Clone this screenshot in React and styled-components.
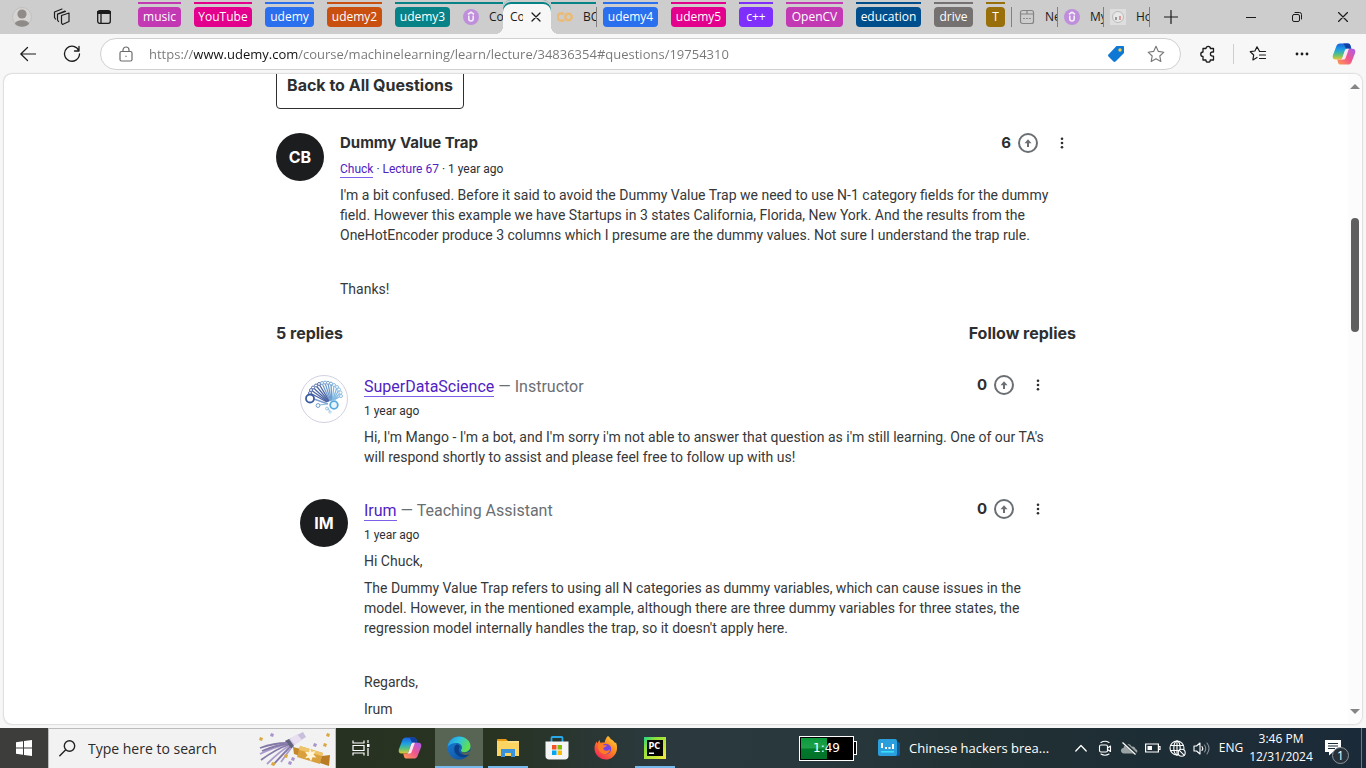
import React from "react";
import styled, { createGlobalStyle } from "styled-components";

const content = 'Roboto, "Liberation Sans", sans-serif';
const heading = 'Inter, "Liberation Sans", sans-serif';
const chrome = '"Open Sans", "Noto Sans", sans-serif';

const Global = createGlobalStyle`
  *, *::before, *::after { box-sizing: border-box; }
  html, body { margin: 0; background: #f7f7f7; }
  body { font-family: ${content}; color: #2d2f31; }
  button, input { font: inherit; color: inherit; margin: 0; padding: 0; border: 0; background: none; }
  p { margin: 0; }
  svg { display: block; flex: none; }
`;

const Screen = styled.div`
  display: flex;
  flex-direction: column;
  height: 100vh;
  overflow: hidden;
`;

/* ---------- tab strip ---------- */

const TabStrip = styled.header`
  display: flex;
  flex: none;
  height: 34px;
  background: #cdcdcd;
  font: 12px/20px ${chrome};
  color: #1b1b1b;
`;

const StripButton = styled.button`
  display: flex;
  align-items: center;
  justify-content: center;
  flex: none;
  width: ${(p) => p.$w || 40}px;
  height: 34px;
`;

const StripStart = styled.div`
  display: flex;
  flex: none;
  width: 138px;
  padding-left: 2px;
`;

const Groups = styled.div`
  display: flex;
  gap: 13px;
  flex: none;
  margin-right: ${(p) => p.$after || 0}px;
`;

const Group = styled.button`
  display: flex;
  flex-direction: column;
  gap: 3px;
  width: ${(p) => p.$w}px;
  padding-top: 2px;
  color: #fff;
  &::before {
    content: "";
    width: 100%;
    height: 2px;
    background: ${(p) => p.$c};
  }
  span {
    width: 100%;
    height: 20px;
    border-radius: 4px;
    line-height: 19px;
    text-align: center;
    background: ${(p) => p.$c};
  }
`;

const flare = {
  left: "radial-gradient(circle at 0 0, transparent 8px, #f7f7f7 8px) right bottom / 8px 8px no-repeat",
  right: "radial-gradient(circle at 100% 0, transparent 8px, #f7f7f7 8px) left bottom / 8px 8px no-repeat",
};

const Tab = styled.button`
  display: flex;
  align-items: center;
  gap: ${(p) => p.$gap || 10}px;
  flex: none;
  width: ${(p) => p.$w}px;
  height: 34px;
  padding: 0 0 0 ${(p) => p.$pad || 8}px;
  background: ${(p) => (p.$active ? "#f7f7f7" : flare[p.$side] || "transparent")};
  border-radius: ${(p) => (p.$active ? "8px 8px 0 0" : "0")};
  box-shadow: ${(p) => (p.$group ? "inset 0 2px 0 #cdcdcd, inset 0 4px 0 #078387" : "none")};
  white-space: nowrap;
`;

const TabText = styled.span`
  width: ${(p) => p.$w || 13}px;
  overflow: hidden;
  text-align: left;
`;

const Divider = styled.span`
  flex: none;
  align-self: center;
  width: 1px;
  height: 20px;
  background: ${(p) => p.$c || "#808080"};
  margin-right: ${(p) => p.$after || 0}px;
`;

const WindowButtons = styled.div`
  display: flex;
  margin-left: auto;
`;

/* ---------- toolbar ---------- */

const Toolbar = styled.nav`
  display: flex;
  align-items: center;
  flex: none;
  height: 40px;
  padding-left: 8px;
`;

const ToolButton = styled.button`
  display: flex;
  align-items: center;
  justify-content: center;
  flex: none;
  width: ${(p) => p.$w || 40}px;
  height: 32px;
`;

const ToolGroup = styled.div`
  display: flex;
  align-items: center;
`;

const Address = styled.label`
  display: flex;
  align-items: center;
  flex: 1;
  min-width: 0;
  height: 32px;
  margin-left: 4px;
  padding: 0 4px 0 17px;
  gap: 15px;
  background: #fff;
  border: 1px solid #d0d0d0;
  border-radius: 16px;
`;

const Url = styled.input`
  flex: 1;
  min-width: 0;
  height: 28px;
  font: 13px/20px ${chrome};
  color: transparent;
  background: linear-gradient(90deg, #767676 45px, #111 45px, #111 149px, #767676 149px);
  background-clip: text;
  -webkit-background-clip: text;
  outline: none;
`;

/* ---------- web page ---------- */

const Panel = styled.main`
  display: flex;
  flex: 1;
  min-height: 0;
  margin: 0 4px 4px;
  background: #fff;
  border-radius: 8px;
  box-shadow: 0 0 2px rgba(0, 0, 0, 0.35);
  overflow: hidden;
`;

const Scroller = styled.div`
  flex: 1;
  min-width: 0;
  overflow: hidden;
`;

const Column = styled.div`
  max-width: 800px;
  margin: -13px auto 0;
`;

const BackButton = styled.button`
  display: block;
  width: 188px;
  height: 48px;
  border: 1px solid #2d2f31;
  border-radius: 4px;
  font: 700 16px/20px ${heading};
  white-space: nowrap;
`;

const Post = styled.article`
  display: flex;
  gap: 16px;
  margin-top: ${(p) => p.$top}px;
`;

const Avatar = styled.div`
  display: flex;
  align-items: center;
  justify-content: center;
  flex: none;
  width: 48px;
  height: 48px;
  border-radius: 50%;
  border: ${(p) => (p.$logo ? "1px solid #d1d2e0" : "0")};
  background: ${(p) => (p.$logo ? "#fff" : "#1c1d1f")};
  color: #fff;
  font: 700 16px/20px ${heading};
`;

const PostMain = styled.div`
  flex: 1;
  min-width: 0;
`;

const PostHead = styled.div`
  display: flex;
  align-items: flex-start;
  justify-content: space-between;
`;

const Title = styled.h2`
  margin: 0;
  font: 700 15px/20px ${heading};
`;

const Link = styled.a`
  color: #5022c3;
  text-decoration: none;
  border-bottom: ${(p) => (p.$plain ? "0" : "1px solid #7d5fe8")};
`;

const Author = styled.div`
  font-size: 16px;
  line-height: 24px;
  color: #6a6f73;
`;

const Meta = styled.div`
  margin-top: ${(p) => p.$top}px;
  font-size: 12px;
  line-height: 16px;
  a { padding-bottom: 1px; }
`;

const Body = styled.div`
  display: flex;
  flex-direction: column;
  gap: 7px;
  margin-top: 8px;
  font-size: 14px;
  line-height: 20px;
  white-space: nowrap;
  color: #36383a;
  p { min-height: 20px; }
`;

const Votes = styled.div`
  display: flex;
  align-items: center;
  height: 20px;
  font: 700 15px/20px ${heading};
`;

const VoteButton = styled.button`
  margin: 0 10px 0 7px;
`;

const MenuButton = styled.button`
  display: flex;
  justify-content: center;
  width: 28px;
`;

const RepliesHead = styled.div`
  display: flex;
  justify-content: space-between;
  margin-top: 24px;
  font: 700 16px/20px ${heading};
`;

const Replies = styled.section`
  padding: 0 24px;
`;

const Scrollbar = styled.div`
  display: flex;
  flex-direction: column;
  align-items: center;
  flex: none;
  width: 14px;
  padding: 10px 0;
  background: #fcfcfc;
`;

const Track = styled.div`
  display: flex;
  flex-direction: column;
  flex: 1;
  width: 8px;
  &::before { content: ""; flex: 128; }
  &::after { content: ""; flex: 375; }
`;

const Thumb = styled.div`
  flex: 114;
  border-radius: 4px;
  background: #5f5f5f;
`;

/* ---------- taskbar ---------- */

const Taskbar = styled.footer`
  display: flex;
  flex: none;
  height: 40px;
  background: linear-gradient(90deg, #263021 0%, #283322 36%, #2b393f 48%, #28383c 60%, #203033 72%, #1b2a38 100%);
  color: #fff;
  font: 13px/20px ${chrome};
`;

const Start = styled.button`
  display: flex;
  align-items: center;
  justify-content: center;
  flex: none;
  width: 48px;
  background: #3d3d3c;
`;

const Search = styled.label`
  display: flex;
  align-items: center;
  flex: none;
  width: 288px;
  padding: 0 3px 0 10px;
  gap: 12px;
  background: #f2f2f2;
  border: 1px solid #bcbcbc;
  border-bottom: 0;
  input {
    flex: 1;
    min-width: 0;
    font-size: 14px;
    color: #2b2b2b;
    outline: none;
  }
  input::placeholder { color: #2b2b2b; opacity: 1; }
`;

const Apps = styled.div`
  display: flex;
  gap: 1px;
  padding-left: 1px;
`;

const AppButton = styled.button`
  display: flex;
  align-items: center;
  justify-content: center;
  width: 48px;
  height: 40px;
  background: ${(p) => (p.$active ? "#586454" : "transparent")};
  position: relative;
  &::after {
    content: "";
    display: ${(p) => (p.$line ? "block" : "none")};
    position: absolute;
    left: ${(p) => (p.$active ? 0 : 4)}px;
    right: ${(p) => (p.$active ? 0 : 4)}px;
    bottom: 0;
    height: 2px;
    background: #76b9ed;
  }
`;

const TaskRight = styled.div`
  display: flex;
  align-items: center;
  margin-left: auto;
`;

const Battery = styled.div`
  display: flex;
  align-items: center;
  flex: none;
  &::after {
    content: "";
    width: 3px;
    height: 14px;
    border: 1px solid #fff;
    border-left: 0;
    background: #000;
  }
`;

const BatteryBody = styled.div`
  width: 55px;
  height: 25px;
  border: 1px solid #fff;
  outline: 1px solid #000;
  outline-offset: -2px;
  background: linear-gradient(90deg, transparent 50%, #000 50%), linear-gradient(#0a9a3c 0%, #1fa04a 48%, #007a2a 52%, #03702a 100%);
  font: 12px/23px "DejaVu Sans", sans-serif;
  text-align: center;
`;

const News = styled.button`
  display: flex;
  align-items: center;
  gap: 9px;
  width: 172px;
  margin: 0 19px 0 21px;
  white-space: nowrap;
`;

const TrayButton = styled.button`
  display: flex;
  align-items: center;
  justify-content: center;
  width: 24px;
  height: 40px;
`;

const Lang = styled.button`
  width: 36px;
  font-size: 12px;
`;

const Clock = styled.button`
  width: 64px;
  font-size: 12px;
  line-height: 18px;
  white-space: nowrap;
  span { display: block; }
`;

const Notice = styled.button`
  position: relative;
  display: flex;
  justify-content: center;
  width: 40px;
`;

const Badge = styled.span`
  position: absolute;
  left: 19px;
  top: 7px;
  width: 17px;
  height: 17px;
  border: 1px solid #8d959b;
  border-radius: 50%;
  background: #28313a;
  font-size: 12px;
  line-height: 15px;
`;

const Desktop = styled.button`
  width: 5px;
  height: 40px;
  margin-left: 8px;
  border-left: 1px solid #6d7882;
`;

/* ---------- icons ---------- */

const Line = ({ s = 16, w = 1, c = "#1b1b1b", children, vb }) => (
  <svg width={s} height={s} viewBox={vb || `0 0 ${s} ${s}`} fill="none" stroke={c} strokeWidth={w} strokeLinecap="round" strokeLinejoin="round" aria-hidden="true">
    {children}
  </svg>
);

const UdemyIcon = () => (
  <svg width="16" height="16" viewBox="0 0 16 16" aria-hidden="true">
    <circle cx="8" cy="8" r="8" fill="#bf8fdc" />
    <path d="M5 5.2 8 3.3l3 1.9M5.8 6.6v3.2c0 3 4.4 3 4.4 0V6.6" fill="none" stroke="#f4ecf8" strokeWidth="1.6" />
  </svg>
);

const CopilotIcon = ({ s = 24, id }) => (
  <svg width={s} height={s} viewBox="0 0 24 24" aria-hidden="true">
    <defs>
      <linearGradient id={`${id}a`} x1="0" y1="0" x2="0" y2="1">
        <stop offset="0" stopColor="#1a5fe0" /><stop offset=".4" stopColor="#1fa3e0" /><stop offset=".7" stopColor="#5cc27c" /><stop offset="1" stopColor="#e8c62c" />
      </linearGradient>
      <linearGradient id={`${id}b`} x1="1" y1="0" x2="0" y2="1">
        <stop offset="0" stopColor="#a95cf0" /><stop offset=".5" stopColor="#f0568c" /><stop offset="1" stopColor="#ffa04c" />
      </linearGradient>
    </defs>
    <path d="M8 1.4h8c1.4 0 2 .8 2.4 2l1 3.4h-4c-1.4 0-2.2.8-2.6 2l-2.2 6.6c-.5 1.5-1.3 2.2-2.8 2.2H3.6C1 17.600.2 15.600.9 13.300L4.300 4.200C5 2.300 6 1.400 8 1.400z" fill={`url(#${id}a)`} />
    <path d="M13 1.400h3c1.400 0 2 .8 2.400 2l1 3.400h-4c-1.400 0-2-.8-2.400-2.200C12.600 3 12 1.400 10.800 1.400z" fill="#123fa6" />
    <path d="M16 22.600H8.600c-1.500 0-2.200-.8-2.600-2.200l-.8-2.800h3c1.500 0 2.300-.7 2.800-2.200l2.200-6.600c.4-1.200 1.200-2 2.600-2h4.600c2.600 0 3.400 2 2.700 4.300l-3.400 8.700c-.7 1.900-1.700 2.800-3.700 2.800z" fill={`url(#${id}b)`} />
    <path d="M10.600 15.400l2.300-6.600c.4-1.200 1-1.700 2-2h2l-3.200 9c-.5 1.300-1.300 1.800-2.400 1.800H9c.8-.4 1.300-1.200 1.600-2.200z" fill="#fff" opacity=".85" />
  </svg>
);

const UpIcon = () => (
  <svg width="20" height="20" viewBox="0 0 20 20" fill="none" stroke="#6a6f73" aria-hidden="true">
    <circle cx="10" cy="10" r="9" strokeWidth="2" />
    <path d="M10 14V8" strokeWidth="2" />
    <path d="M6.500 10.200 10 6.200l3.500 4z" fill="#6a6f73" stroke="none" />
  </svg>
);

const DotsIcon = () => (
  <svg width="4" height="12" viewBox="0 0 4 12" fill="#2d2f31" aria-hidden="true">
    <circle cx="2" cy="1.700" r="1.300" /><circle cx="2" cy="6" r="1.300" /><circle cx="2" cy="10.300" r="1.300" />
  </svg>
);

const fan = [
  [8, 14], [9, 11], [11, 8.500], [14, 6.500], [17, 5], [20, 4], [23, 3.600], [26, 3.800], [29, 4.600], [32, 6], [35, 8], [37, 10.500], [38.500, 13.500], [39, 17],
];

const ScienceLogo = () => (
  <svg width="44" height="40" viewBox="0 0 44 40" fill="none" aria-hidden="true">
    {fan.map(([x, y], i) => (
      <g key={x} stroke={i < 5 ? "#4a63a4" : i < 9 ? "#6f9ccc" : "#82b8e2"}>
        <path d={`M${x} ${y}L${25 + i * 0.6} ${23 - i * 0.2}`} strokeWidth="1.300" />
        <circle cx={x} cy={y} r="1.500" fill="#fff" strokeWidth=".9" />
      </g>
    ))}
    <path d="M12 20l14 5" stroke="#7d9fcd" strokeWidth="1.500" />
    <circle cx="8" cy="19.500" r="4" fill="#fff" stroke="#3c5ba0" strokeWidth="1.800" />
    <circle cx="32" cy="26" r="3.800" fill="#e9f5fd" stroke="#58a9de" strokeWidth="1.800" />
    <path d="M17 26l8-1M26 29l2 4" stroke="#86b6dc" />
    <circle cx="16" cy="26.500" r="1.900" fill="#fff" stroke="#6f9ccc" />
    <circle cx="25" cy="29.500" r="1.400" stroke="#9cc7e8" /><circle cx="28" cy="33" r="1.200" stroke="#b4d6ee" />
  </svg>
);

const star = "M8 1.200l2.100 4.500 4.900.7-3.600 3.400.9 4.900L8 12.300l-4.300 2.400.9-4.900L1 6.400l4.900-.7z";

const Confetti = () => (
  <svg width="74" height="36" viewBox="0 0 74 36" aria-hidden="true">
    <path d="M45 1l3 5-15 10-6-6z" fill="#c9bedb" />
    <path d="M39 3l5 6-7 5-5-6z" fill="#e8dff0" />
    <path d="M31 8l5 7-3 3-6-8z" fill="#62637f" />
    {["M29 12Q16 12 2 17", "M29 13Q16 16 2 23", "M30 14Q18 18 3 29", "M31 15Q22 20 9 33", "M32 16Q26 22 15 34", "M33 17Q28 24 23 31", "M30 13Q18 14 4 20"].map((d, i) => (
      <path key={d} d={d} fill="none" stroke={i % 2 ? "#aa9bcb" : "#8579a8"} strokeWidth="1.800" />
    ))}
    <path d="M35 16l8 2-1 7-6-2z" fill="#c3872c" />
    <path d="M42 15l23 7-3 11-23-7z" fill="#d9a03d" />
    <path d="M42 15l23 7-1 3-23-6z" fill="#efc367" />
    <path d="M64 25l8-1-1 11-9-3z" fill="#b97c24" />
    <path d="M52 17l1.500 4 4-1-2 3.500 3 3-4-.2-1.500 4-2-3.500-4 .5 2.500-3-2.500-3.500 4 .5z" fill="#fff4d8" />
    <g fill="#d9a840"><path d="M2 6l3 1-1 3-3-1zM69 2l3 1-1 3-3-1zM66 12l3 1-1 3-3-1zM14 31l4 1-2 3-3-1zM27 23l3 1-1 3-3-1z" /></g>
    <g fill="#a893cc"><path d="M13 2l3 1-1 3-3-1zM56 12l3 1-1 3-3-1zM34 26l3 1-1 3-3-1zM31 30l3 1-1 3-3-1z" /></g>
  </svg>
);

const EdgeIcon = () => (
  <svg width="24" height="24" viewBox="0 0 24 24" aria-hidden="true">
    <defs>
      <linearGradient id="edgeTop" x1="0" y1="0" x2="1" y2=".4"><stop offset="0" stopColor="#1f8fe0" /><stop offset=".5" stopColor="#2fc2df" /><stop offset="1" stopColor="#5fe04f" /></linearGradient>
      <linearGradient id="edgeLow" x1="0" y1="0" x2="1" y2="1"><stop offset="0" stopColor="#1b7fd6" /><stop offset="1" stopColor="#0c4a98" /></linearGradient>
    </defs>
    <circle cx="12" cy="12" r="11.500" fill="url(#edgeLow)" />
    <path d="M.6 11C1.500 4.500 6.500.5 12 .5c6.500 0 11.500 4.600 11.500 9.500 0 4-3 6.200-6 6.200-2.600 0-3.900-1-3.500-2 .4-.8 1-1.300 1-2.700C15 9 12.500 7 9.500 7 5.500 7 2 8.500.6 11z" fill="url(#edgeTop)" />
    <path d="M9.500 8.500C6 10.500 6.300 18 12.500 20.500c3 1.200 6 .8 9-1.200l.8-1.300c-5 2-10 .5-10.500-3.500-.2-2 .3-3 1-4-.8-1.500-2-2.300-3.300-2z" fill="#0b3f86" />
    <path d="M14 15c2 2 6 2.200 9 .2l1.500 1.800-2.300 1.300c-3.700 1.300-7.700.5-8.200-3.300z" fill="#586454" />
  </svg>
);

const FolderIcon = () => (
  <svg width="22" height="20" viewBox="0 0 22 20" aria-hidden="true">
    <path d="M0 3V1.500L1 1h8l2 2z" fill="#e79a12" />
    <path d="M0 3h22v15H0z" fill="#fcd462" /><path d="M0 3h9l2 1.500h11V3z" fill="#ffe391" />
    <path d="M4 11h14v8h-4v-4H8v4H4z" fill="#3a92d8" />
  </svg>
);

const StoreIcon = () => (
  <svg width="24" height="24" viewBox="0 0 24 24" aria-hidden="true">
    <path d="M6.500 6V2c0-.6.4-1 1-1h9c.6 0 1 .4 1 1v4" fill="none" stroke="#28a8e8" strokeWidth="1.800" />
    <path d="M.5 5.500h23V20c0 2-1.500 3.500-3.500 3.500H4C2 23.500.5 22 .5 20z" fill="#f4f4f4" />
    <path d="M7 9h4.500v4.500H7z" fill="#f35325" /><path d="M12.500 9H17v4.500h-4.500z" fill="#81bc06" />
    <path d="M7 14.500h4.500V19H7z" fill="#05a6f0" /><path d="M12.500 14.500H17V19h-4.500z" fill="#ffba08" />
  </svg>
);

const FirefoxIcon = () => (
  <svg width="24" height="24" viewBox="0 0 24 24" aria-hidden="true">
    <defs>
      <linearGradient id="fox" x1="1" y1="0" x2=".2" y2="1"><stop offset="0" stopColor="#ffe24a" /><stop offset=".45" stopColor="#ff8a1c" /><stop offset="1" stopColor="#f0245e" /></linearGradient>
    </defs>
    <path d="M14 0c1.500 1 2 2.200 3 3.200 1 .4 3 2 4 3.800l1-.6c1.200 3 1.500 6.500.3 9.600-2 5-6 7.500-10.300 7.500C5.500 23.500.5 18.500.5 12.500c0-3 .9-5.500 2.400-7l.4 2C4.500 5.500 5 4.500 5.500 4l1 3c1.500-.6 3-.6 4-.2C11 4 12.500 1 14 0z" fill="url(#fox)" />
    <circle cx="12" cy="13" r="5.200" fill="#7542e5" />
    <path d="M4 8.500c2-1.500 4-.8 6 .8h3c-.5 1.500-2.500 2-3.500 2.500-.5 2 1 3 2.800 3 1.500 0 3-.5 4-2-.5 5-5 6.500-8.500 4.500C4.500 15 3.500 11.500 4 8.500z" fill="#ff7a24" />
  </svg>
);

const PyIcon = () => (
  <svg width="22" height="22" viewBox="0 0 22 22" aria-hidden="true">
    <defs><linearGradient id="pyc" x1="0" y1="0" x2="1" y2="1"><stop offset="0" stopColor="#21d789" /><stop offset=".3" stopColor="#8fe03a" /><stop offset="1" stopColor="#f4ea3c" /></linearGradient></defs>
    <path d="M0 0h22v22H0z" fill="url(#pyc)" /><path d="M3 3h16v16H3z" fill="#050505" />
    <path d="M5 15.500h5v1.500H5z" fill="#fff" />
    <text x="4.500" y="11.500" fill="#fff" fontFamily="DejaVu Sans" fontWeight="700" fontSize="8">PC</text>
  </svg>
);

const NewsIcon = () => (
  <svg width="22" height="18" viewBox="0 0 22 18" aria-hidden="true">
    <path d="M17 3h3c1 0 2 1 2 2v10c0 1-1 2-2 2h-3z" fill="#0d5b9d" />
    <rect width="19" height="17" y="0" rx="2" fill="#2b9fdc" />
    <path d="M3 4h2v5H3zM7 8h2v2H7zM10.500 8h2v2h-2zM14 5h2v5h-2z" fill="#fff" /><path d="M3 12h13v1.600H3z" fill="#38dff8" />
  </svg>
);

const groupsLeft = [["music", "#c239b3", 43], ["YouTube", "#e3008c", 58], ["udemy", "#2a6fed", 49], ["udemy2", "#ca5010", 55], ["udemy3", "#078387", 55]];
const groupsRight = [["udemy4", "#2a6fed", 55], ["udemy5", "#e3008c", 55], ["c++", "#7f2ffb", 34], ["OpenCV", "#c239b3", 57], ["education", "#004e8c", 65], ["drive", "#757170", 39], ["T", "#986f0b", 19]];

const GroupRow = ({ items, after }) => (
  <Groups $after={after}>
    {items.map(([name, c, w]) => <Group key={name} $c={c} $w={w}><span>{name}</span></Group>)}
  </Groups>
);

const VoteBox = ({ count }) => (
  <Votes>
    <span>{count}</span>
    <VoteButton aria-label="Upvote"><UpIcon /></VoteButton>
    <MenuButton aria-label="More options"><DotsIcon /></MenuButton>
  </Votes>
);

const Reply = ({ avatar, logo, name, role, children }) => (
  <Post $top={32}>
    <Avatar $logo={logo}>{avatar}</Avatar>
    <PostMain>
      <PostHead>
        <Author><Link href="#user">{name}</Link> — {role}</Author>
        <VoteBox count={0} />
      </PostHead>
      <Meta $top={4}>1 year ago</Meta>
      <Body>{children}</Body>
    </PostMain>
  </Post>
);

export default function App() {
  return (
    <Screen>
      <Global />
      <TabStrip>
        <StripStart>
          <StripButton aria-label="Profile">
            <svg width="20" height="20" viewBox="0 0 20 20"><circle cx="10" cy="10" r="9.500" fill="#d6d4d2" stroke="#c2c0be" /><circle cx="10" cy="7" r="4.600" fill="#8f8b88" /><path d="M3 17c0-5 14-5 14 0-3.500 3.500-10.500 3.500-14 0z" fill="#8f8b88" /></svg>
          </StripButton>
          <StripButton aria-label="Workspaces">
            <Line s={18} w={1.2}><path d="M8.500 7.500 16 5v8.500L9.500 16.500 8.500 15zM5.500 13.500l-1-1.500V6L12 3M2.500 11l-1-1.500V4L9 1M5.500 6l7-2.500" /></Line>
          </StripButton>
          <StripButton $w={44} aria-label="Tab actions">
            <Line s={14} w={1.3}><rect x=".7" y=".7" width="12.600" height="12.600" rx="2" /><path d="M1 2.600h12" strokeWidth="3" /><path d="M4 4v9" /></Line>
          </StripButton>
        </StripStart>
        <GroupRow items={groupsLeft} />
        <Tab $group $side="left" $w={53} $pad={13}><UdemyIcon /><TabText $w={14}>Co</TabText></Tab>
        <Tab $group $active $w={48} $pad={7} $gap={8}>
          <TabText>Co</TabText>
          <Line s={10} w={1.3}><path d="M1 1l8 8M9 1L1 9" /></Line>
        </Tab>
        <Tab $group $side="right" $w={45} $pad={6}>
          <svg width="16" height="12" viewBox="0 0 16 12" fill="none" stroke="#e9bb76" strokeWidth="2.600"><path d="M7 3.300A3.700 3.700 0 1 0 7 8.700" /><circle cx="11.500" cy="6" r="3.200" /></svg>
          <TabText>BC</TabText>
        </Tab>
        <Divider $after={6} />
        <GroupRow items={groupsRight} after={6} />
        <Divider />
        <Tab $w={45} $pad={7}>
          <Line s={16} c="#858585" w={1.2}><rect x="1.500" y="1.500" width="13" height="13" rx="2" /><path d="M2 5h12M8 5V2M4.500 9.500h1M7.500 9.500h1M10.500 9.500h1" /></Line>
          <TabText>Ne</TabText>
        </Tab>
        <Divider />
        <Tab $w={45} $pad={6}><UdemyIcon /><TabText>My</TabText></Tab>
        <Divider />
        <Tab $w={45} $pad={6}>
          <svg width="16" height="16" viewBox="0 0 16 16"><path d="M0 0h16v16H0z" fill="#dedede" /><circle cx="8" cy="8" r="5.500" fill="#e8e8e8" stroke="#bbb" /><path d="M5 8h2v3H5z" fill="#999" /><path d="M9 7h2v4H9z" fill="#d99a9a" /></svg>
          <TabText>Ho</TabText>
        </Tab>
        <Divider />
        <StripButton $w={42} aria-label="New tab"><Line s={14} w={1.2}><path d="M7 .5v13M.5 7h13" /></Line></StripButton>
        <WindowButtons>
          <StripButton $w={46} aria-label="Minimize"><Line s={10}><path d="M0 5.500h10" /></Line></StripButton>
          <StripButton $w={46} aria-label="Restore"><Line s={10}><rect x=".5" y="2.500" width="7" height="7" rx="1.500" /><path d="M3 .5h4.500a2 2 0 0 1 2 2V7" /></Line></StripButton>
          <StripButton $w={46} aria-label="Close"><Line s={10} w={1.2}><path d="M.5.5l9 9M9.500.5l-9 9" /></Line></StripButton>
        </WindowButtons>
      </TabStrip>

      <Toolbar>
        <ToolButton aria-label="Back"><Line s={16} w={1.2}><path d="M15.500 8H.8M7.500 1.500L.8 8l6.700 6.500" /></Line></ToolButton>
        <ToolButton $w={48} aria-label="Refresh"><Line s={18} w={1.3}><path d="M16 6A7.500 7.500 0 1 0 16.500 9M16 1.500V6h-4.500" /></Line></ToolButton>
        <Address>
          <Line s={16} c="#6b6b6b" w={1.2} vb="-1 0 16 16"><rect x="1" y="5.500" width="12" height="9.500" rx="1.500" /><path d="M4 5.500V4a3 3 0 0 1 6 0v1.500M7 10v.5" /></Line>
          <Url aria-label="Address" readOnly value="https://www.udemy.com/course/machinelearning/learn/lecture/34836354#questions/19754310" />
          <ToolGroup>
            <ToolButton aria-label="Shopping">
              <svg width="18" height="18" viewBox="0 0 18 18"><path d="M9.500 1H16c.6 0 1 .4 1 1v6L8.500 16.500c-.6.6-1.400.6-2 0l-5-5c-.6-.6-.6-1.400 0-2z" fill="#0f78d4" /><circle cx="13" cy="5" r="1.700" fill="#f5cf4a" /></svg>
            </ToolButton>
            <ToolButton aria-label="Add favorite"><Line s={18} c="#777" vb="0 0 16 16"><path d={star} /></Line></ToolButton>
          </ToolGroup>
        </Address>
        <ToolButton $w={52} aria-label="Extensions">
          <Line s={18} w={1.3} vb="-1 0 18 18"><path d="M4 3.500h3a2.200 2.200 0 0 1 4.400 0H14.500V7h-1a2 2 0 0 0 0 4.200h1V15h-3.200a2.200 2.200 0 0 1-4.400 0H4v-3.600a2.200 2.200 0 0 1 0-4.400z" /></Line>
        </ToolButton>
        <Divider $c="#cfcfcf" />
        <ToolButton $w={48} aria-label="Favorites"><Line s={18} w={1.2}><path d="M10.500 6.200L8 1.800 5.900 6l-4.600.7 3.400 3.300-.8 4.900L8 12.500M10.500 6.500h6M10.500 10h6M10.500 13.500h6" /></Line></ToolButton>
        <ToolButton aria-label="Settings and more">
          <svg width="14" height="4" viewBox="0 0 14 4" fill="#1b1b1b"><circle cx="2" cy="2" r="1.400" /><circle cx="7" cy="2" r="1.400" /><circle cx="12" cy="2" r="1.400" /></svg>
        </ToolButton>
        <ToolButton $w={44} aria-label="Copilot"><CopilotIcon s={24} id="cpt" /></ToolButton>
      </Toolbar>

      <Panel>
        <Scroller>
          <Column>
            <BackButton>Back to All Questions</BackButton>
            <Post $top={24}>
              <Avatar>CB</Avatar>
              <PostMain>
                <PostHead>
                  <Title>Dummy Value Trap</Title>
                  <VoteBox count={6} />
                </PostHead>
                <Meta $top={8}><Link href="#user">Chuck</Link> · <Link $plain href="#lecture">Lecture 67</Link> · 1 year ago</Meta>
                <Body>
                  <p>
                    I'm a bit confused. Before it said to avoid the Dummy Value Trap we need to use N-1 category fields for the dummy<br />
                    field. However this example we have Startups in 3 states California, Florida, New York. And the results from the<br />
                    OneHotEncoder produce 3 columns which I presume are the dummy values. Not sure I understand the trap rule.
                  </p>
                  <p />
                  <p>Thanks!</p>
                </Body>
              </PostMain>
            </Post>
            <RepliesHead><span>5 replies</span><button>Follow replies</button></RepliesHead>
            <Replies>
              <Reply logo avatar={<ScienceLogo />} name="SuperDataScience" role="Instructor">
                <p>
                  Hi, I'm Mango - I'm a bot, and I'm sorry i'm not able to answer that question as i'm still learning. One of our TA's<br />
                  will respond shortly to assist and please feel free to follow up with us!
                </p>
              </Reply>
              <Reply avatar="IM" name="Irum" role="Teaching Assistant">
                <p>Hi Chuck,</p>
                <p>
                  The Dummy Value Trap refers to using all N categories as dummy variables, which can cause issues in the<br />
                  model. However, in the mentioned example, although there are three dummy variables for three states, the<br />
                  regression model internally handles the trap, so it doesn't apply here.
                </p>
                <p />
                <p>Regards,</p>
                <p>Irum</p>
              </Reply>
            </Replies>
          </Column>
        </Scroller>
        <Scrollbar>
          <svg width="10" height="5" viewBox="0 0 10 5"><path d="M0 5L5 0l5 5z" fill="#858585" /></svg>
          <Track><Thumb /></Track>
          <svg width="10" height="5" viewBox="0 0 10 5"><path d="M0 0l5 5 5-5z" fill="#858585" /></svg>
        </Scrollbar>
      </Panel>

      <Taskbar>
        <Start aria-label="Start">
          <svg width="16" height="16" viewBox="0 0 16 16" fill="#fff"><path d="M0 2.200l7-1v6.300H0zM8 1l8-1v7.500H8zM0 8.500h7v6.300l-7-1zM8 8.500h8V16l-8-1z" /></svg>
        </Start>
        <Search>
          <Line s={17} c="#222" w={1.400}><circle cx="10.500" cy="6" r="5.200" /><path d="M6.500 10L.8 15.800" /></Line>
          <input aria-label="Search" placeholder="Type here to search" />
          <Confetti />
        </Search>
        <Apps>
          <AppButton aria-label="Task view">
            <svg width="18" height="16" viewBox="0 0 18 16" fill="none" stroke="#fff" strokeWidth="1.200"><path d="M1 .5V3h11V.5M1 15.500V13h11v2.500M1 5.500h11v5H1zM16 0v3M16 8v8" /><path d="M15 4h2.500v3H15z" fill="#fff" stroke="none" /></svg>
          </AppButton>
          <AppButton aria-label="Copilot"><CopilotIcon id="cpb" /></AppButton>
          <AppButton $active $line aria-label="Edge"><EdgeIcon /></AppButton>
          <AppButton $line aria-label="File Explorer"><FolderIcon /></AppButton>
          <AppButton aria-label="Store"><StoreIcon /></AppButton>
          <AppButton aria-label="Firefox"><FirefoxIcon /></AppButton>
          <AppButton $line aria-label="PyCharm"><PyIcon /></AppButton>
        </Apps>
        <TaskRight>
          <Battery><BatteryBody>1:49</BatteryBody></Battery>
          <News><NewsIcon /><span>Chinese hackers brea...</span></News>
          <TrayButton aria-label="Show hidden icons"><Line s={12} c="#fff" w={1.300}><path d="M.8 9L6 3.500 11.200 9" /></Line></TrayButton>
          <TrayButton aria-label="Meet now"><Line s={16} c="#fff" w={1.100}><rect x="2.500" y="5" width="8" height="7" rx="1.500" /><path d="M10.500 8l3-2v5.500l-3-2M4 2.500Q8 0 12 2.500M4 14Q8 16.500 12 14" /></Line></TrayButton>
          <TrayButton aria-label="OneDrive">
            <svg width="18" height="14" viewBox="0 0 18 14"><path d="M4 12.500C0 12.500 0 7 3.500 7 4 2.500 10 1.500 11.500 5.500c3-.5 4 1.500 4 2.500 3 1 2 4.500 0 4.500z" fill="#9ba3a4" /><path d="M3 1l13 12" stroke="#203033" strokeWidth="3" /><path d="M2.500 1.500l13 12" stroke="#fff" strokeWidth="1.200" /></svg>
          </TrayButton>
          <TrayButton aria-label="Battery">
            <svg width="16" height="10" viewBox="0 0 16 10" fill="none" stroke="#fff" strokeWidth="1.200"><path d="M.6 1h12.800v8H.6zM13.500 3.500h1.500v3h-1.500" /><path d="M2.500 3H7v4H2.500z" fill="#fff" stroke="none" /></svg>
          </TrayButton>
          <TrayButton aria-label="Network">
            <Line s={17} c="#fff" w={1.100}><circle cx="8" cy="8" r="7" /><ellipse cx="8" cy="8" rx="3.200" ry="7" /><path d="M1.500 5.500h13M1.500 10.500h13M8 1v14" /><circle cx="12.700" cy="12.700" r="3.500" fill="#1e2d36" /><path d="M10.300 10.300l4.800 4.800" /></Line>
          </TrayButton>
          <TrayButton aria-label="Volume">
            <Line s={17} c="#fff" w={1.100}><path d="M1 6h2.500L7 3v11L3.500 11H1zM9 6.500q1.500 2 0 4" /><path d="M11.500 5q2.500 3.500 0 7M14 3q4 5.500 0 11" stroke="#87919a" /></Line>
          </TrayButton>
          <Lang>ENG</Lang>
          <Clock><span>3:46 PM</span><span>12/31/2024</span></Clock>
          <Notice aria-label="Notifications, 1 new">
            <svg width="16" height="16" viewBox="0 0 16 16"><path d="M0 0h16v12H8l-4 3.500V12H0z" fill="#fff" /><path d="M3 3.500h10M3 6h10M3 8.500h7" stroke="#1b2a38" /></svg>
            <Badge>1</Badge>
          </Notice>
          <Desktop aria-label="Show desktop" />
        </TaskRight>
      </Taskbar>
    </Screen>
  );
}
